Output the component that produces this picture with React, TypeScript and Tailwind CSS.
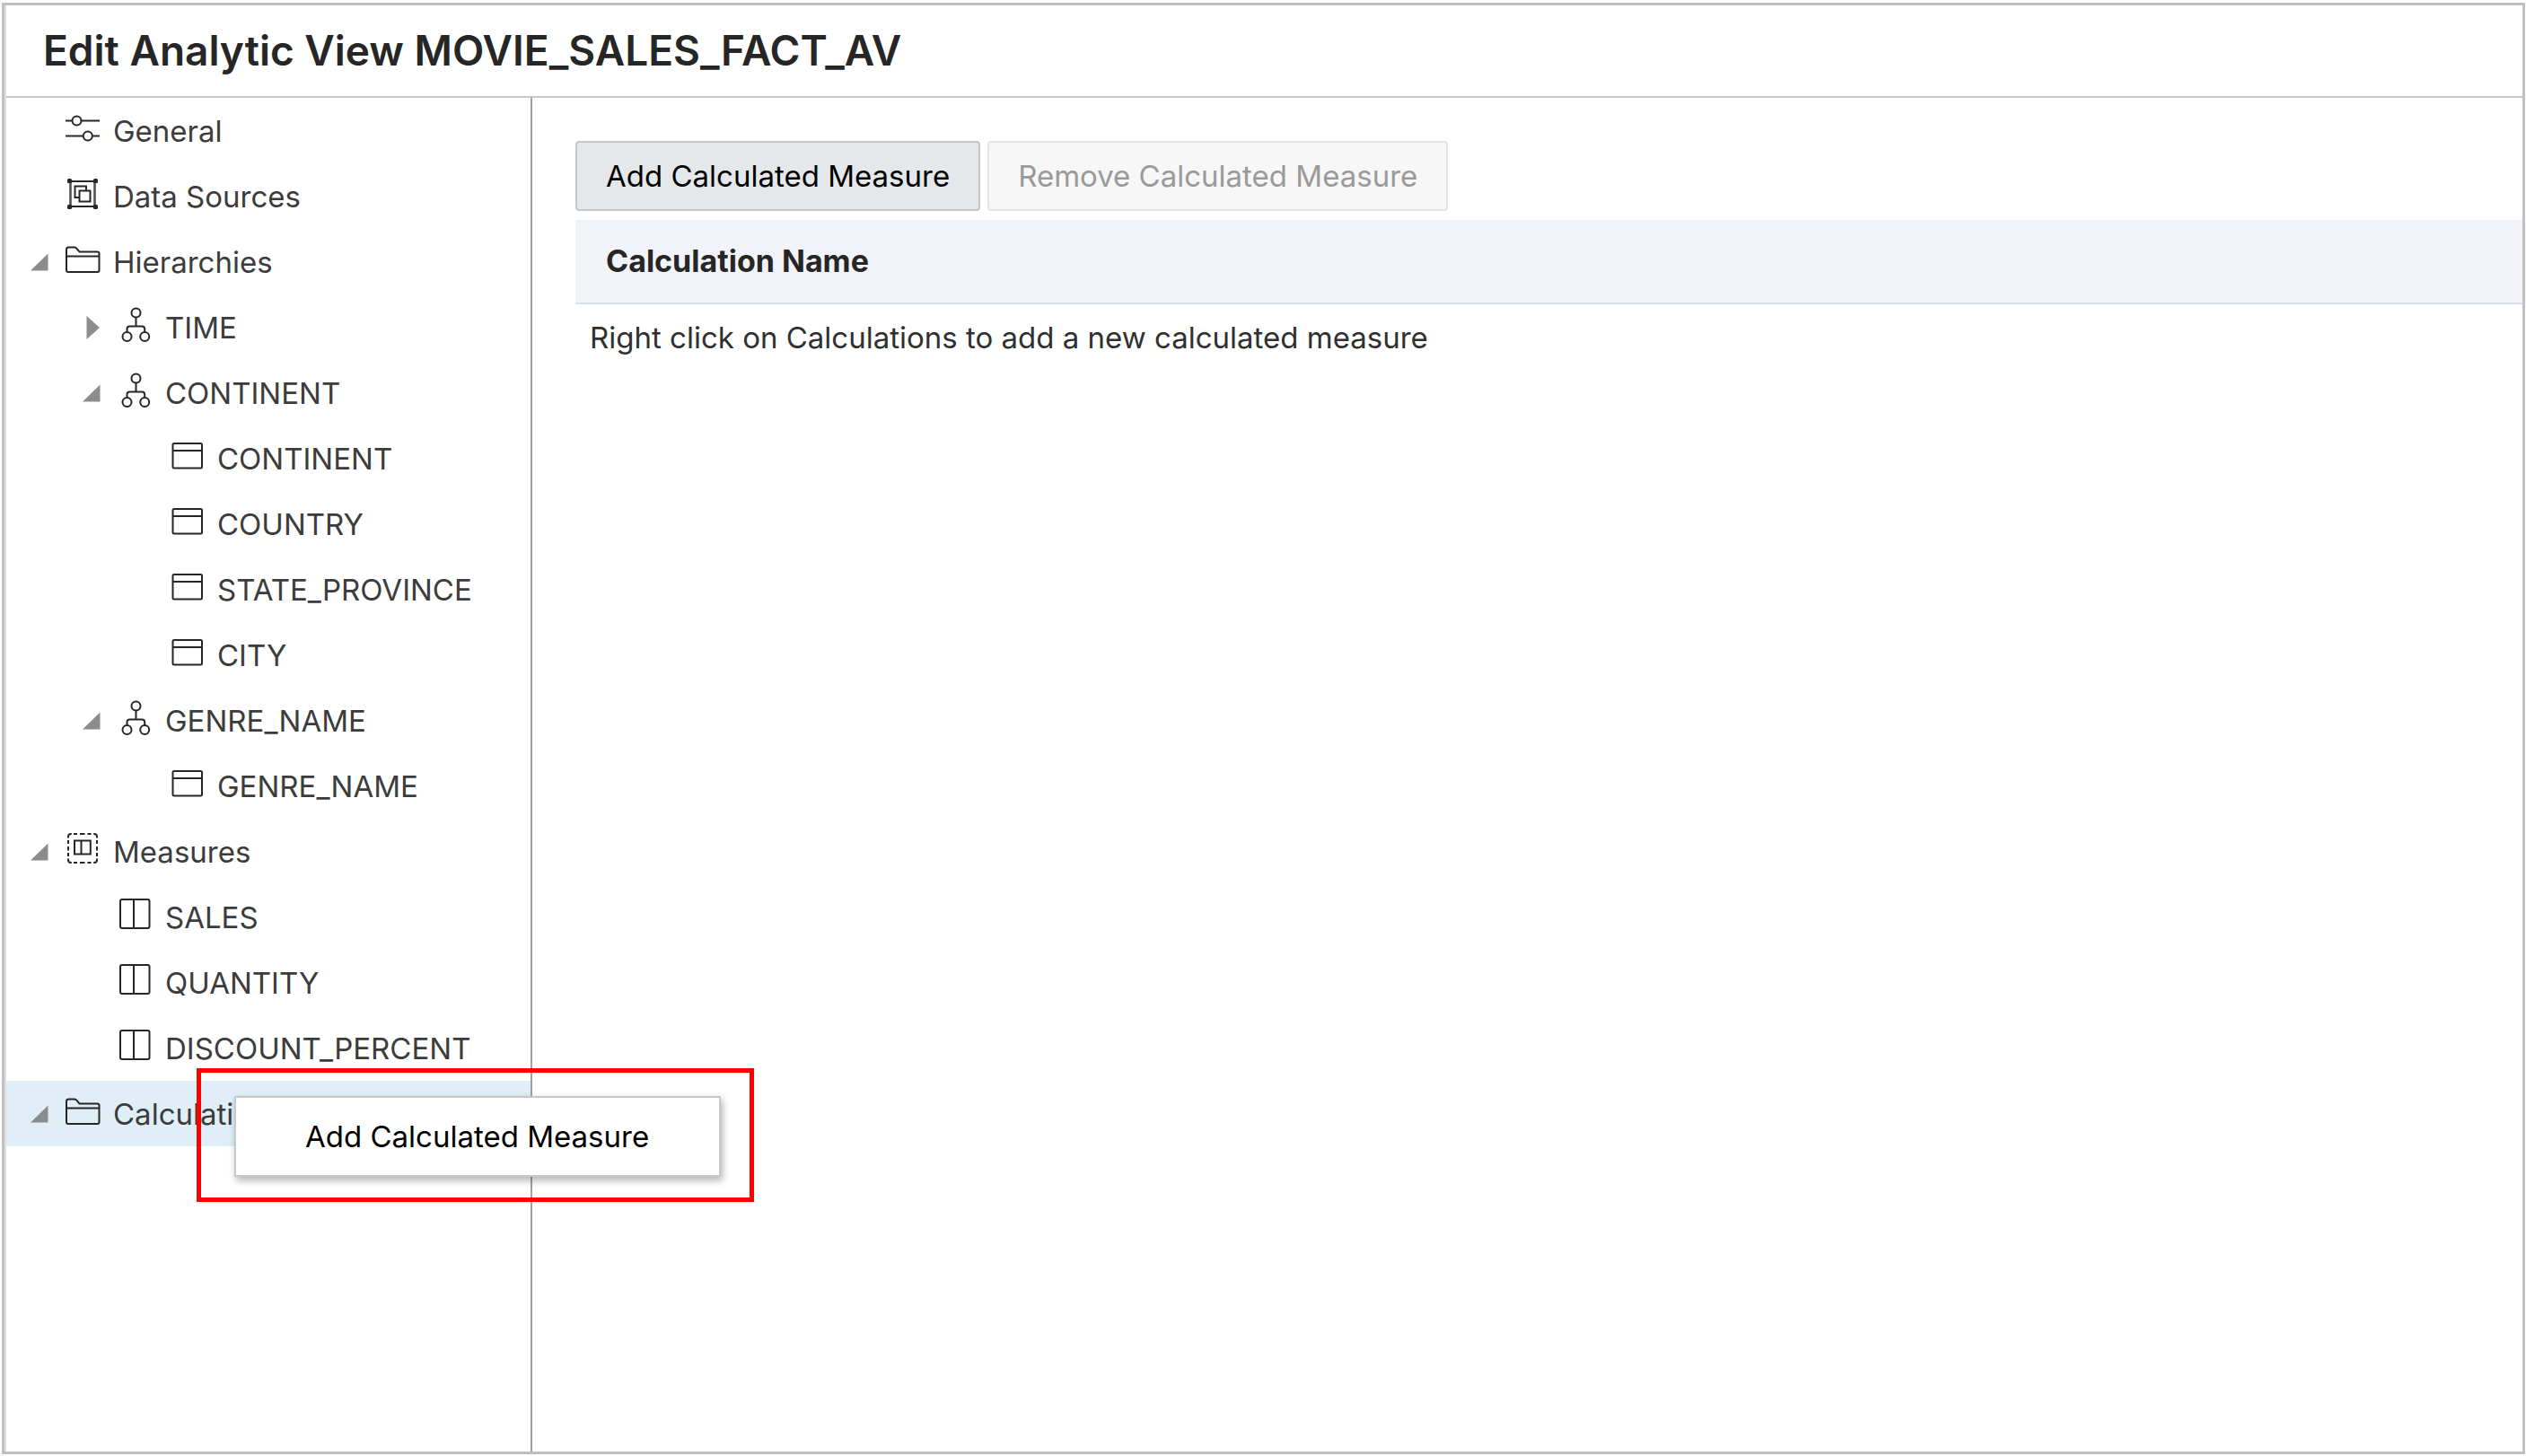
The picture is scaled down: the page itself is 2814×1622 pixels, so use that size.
import type { ReactNode } from "react";

type IconName = "sliders" | "sources" | "folder" | "hierarchy" | "level" | "measures" | "column";

type TreeItem = {
  label: string;
  icon: IconName;
  level: 0 | 1 | 2;
  state?: "open" | "closed";
  selected?: boolean;
};

const items: TreeItem[] = [
  { label: "General", icon: "sliders", level: 0 },
  { label: "Data Sources", icon: "sources", level: 0 },
  { label: "Hierarchies", icon: "folder", level: 0, state: "open" },
  { label: "TIME", icon: "hierarchy", level: 1, state: "closed" },
  { label: "CONTINENT", icon: "hierarchy", level: 1, state: "open" },
  { label: "CONTINENT", icon: "level", level: 2 },
  { label: "COUNTRY", icon: "level", level: 2 },
  { label: "STATE_PROVINCE", icon: "level", level: 2 },
  { label: "CITY", icon: "level", level: 2 },
  { label: "GENRE_NAME", icon: "hierarchy", level: 1, state: "open" },
  { label: "GENRE_NAME", icon: "level", level: 2 },
  { label: "Measures", icon: "measures", level: 0, state: "open" },
  { label: "SALES", icon: "column", level: 1 },
  { label: "QUANTITY", icon: "column", level: 1 },
  { label: "DISCOUNT_PERCENT", icon: "column", level: 1 },
  { label: "Calculations", icon: "folder", level: 0, state: "open", selected: true },
];

const indent = { 0: "pl-[27px]", 1: "pl-[85px]", 2: "pl-[143px]" };

const drawings: Record<IconName, ReactNode> = {
  sliders: (
    <>
      <path d="M1 11.5H8.500M18.500 11.500H39M1 28.500H20.500M31 28.500H39" />
      <circle cx="13.500" cy="11.500" r="5" />
      <circle cx="25.800" cy="28.500" r="5" />
    </>
  ),
  sources: (
    <>
      <path d="M5 6H35M5 34H35" />
      <path d="M6.500 6V34M33.500 6V34" strokeWidth="2.600" strokeOpacity="0.800" />
      <path d="M17 24H11.500V11.500H24V16" />
      <rect x="16.500" y="16.500" width="12" height="12" />
      <g fill="currentColor" stroke="none">
        <rect x="3" y="3" width="5" height="5" rx="1.500" />
        <rect x="32" y="3" width="5" height="5" rx="1.500" />
        <rect x="3" y="32" width="5" height="5" rx="1.500" />
        <rect x="32" y="32" width="5" height="5" rx="1.500" />
      </g>
    </>
  ),
  folder: (
    <path d="M2 16.500H38.500M4.500 6.500H11Q12.500 6.500 13.500 8L16.500 11.500H36.500Q38.500 11.500 38.500 13.500V32Q38.500 34 36.500 34H4Q2 34 2 32V9Q2 6.500 4.500 6.500Z" />
  ),
  hierarchy: (
    <>
      <circle cx="21.500" cy="6.500" r="5" />
      <circle cx="11.500" cy="33" r="5" />
      <circle cx="31.200" cy="33" r="5" />
      <path d="M21.500 11.500V21.500M11.500 28V24.500Q11.500 21.500 14.500 21.500H28Q31.200 21.500 31.200 24.500V28" />
    </>
  ),
  level: (
    <>
      <rect x="4.500" y="6" width="32.500" height="27.500" rx="1.500" />
      <path d="M4.500 14H37" />
    </>
  ),
  measures: (
    <>
      <path d="M4 7.500V6Q4 3 7 3H7.800M32.200 3H33Q36 3 36 6V7.500M36 30.500V32Q36 35 33 35H32.200M7.800 35H7Q4 35 4 32V30.500" />
      <path d="M10 3H14M17 3H22.500M25.500 3H29.500M10 35H14M17 35H22.500M25.500 35H29.500" />
      <path d="M4 10V14M4 17V21.500M4 24V28M36 10V14M36 17V21.500M36 24V28" />
      <rect x="11" y="10.500" width="17.800" height="15" />
      <path d="M18.500 10.500V25.500" />
    </>
  ),
  column: (
    <>
      <rect x="4" y="3" width="32.500" height="32" rx="2" />
      <path d="M19 3V35" />
    </>
  ),
};

function Icon({ name }: { name: IconName }) {
  return (
    <svg
      viewBox="0 0 40 40"
      className="mb-[5px] size-10 shrink-0 text-[#262626]"
      fill="none"
      stroke="currentColor"
      strokeWidth="2"
      aria-hidden="true"
    >
      {drawings[name]}
    </svg>
  );
}

function Arrow({ state }: { state?: "open" | "closed" }) {
  return (
    <svg viewBox="0 0 20 28" className="h-7 w-5 shrink-0" fill="#8b8c8e" aria-hidden="true">
      {state === "open" && <path d="M0 23.500H19.500V4.500Z" />}
      {state === "closed" && <path d="M4.500 1V27L19 14Z" />}
    </svg>
  );
}

function ContextMenu() {
  return (
    <>
      <div
        role="menu"
        className="absolute top-[17px] left-[254px] w-[542px] border-2 border-[#c8c8c8] bg-white shadow-[2px_4px_8px_rgba(0,0,0,0.3)]"
      >
        <button
          type="button"
          role="menuitem"
          className="block w-full py-[22px] pl-[77px] text-left leading-[42px] whitespace-nowrap text-black"
        >
          Add Calculated Measure
        </button>
      </div>
      <div className="pointer-events-none absolute -top-3.5 left-[212px] h-[149px] w-[621px] border-[5px] border-[#ff0000]" />
    </>
  );
}

export default function App() {
  return (
    <div className="flex min-h-screen bg-white pt-[3px] pr-px pb-[2px] pl-[2px] font-['Inter',sans-serif] text-[33px] leading-[42px] text-[#3c3c3c]">
      <div className="flex grow flex-col border-[3px] border-[#c0c0c0]">
        <div className="flex grow flex-col border-l-2 border-[#dfdfdf]">
          <header className="border-b-2 border-[#c6c6c6] px-[41px] pt-5 pb-[21px]">
            <h1 className="text-[46px] leading-[60px] font-semibold text-[#262626]">
              Edit Analytic View MOVIE_SALES_FACT_AV
            </h1>
          </header>
          <div className="flex grow">
            <nav aria-label="Analytic view" className="w-[586px] shrink-0 border-r-2 border-[#9e9e9e]">
              <ul>
                {items.map((item, i) => (
                  <li key={i} className="relative">
                    <button
                      type="button"
                      aria-expanded={item.state ? item.state === "open" : undefined}
                      className={
                        "flex h-[73px] w-full items-center text-left " +
                        indent[item.level] +
                        (item.selected ? " bg-[#e0eef8]" : "")
                      }
                    >
                      <Arrow state={item.state} />
                      <span className="flex items-center gap-3.5 pl-[18px]">
                        <Icon name={item.icon} />
                        <span>{item.label}</span>
                      </span>
                    </button>
                    {item.selected && <ContextMenu />}
                  </li>
                ))}
              </ul>
            </nav>
            <main className="grow pt-12 pl-12">
              <div className="flex gap-2">
                <button
                  type="button"
                  className="rounded-[4px] border-2 border-[#c4c7c8] bg-[#e4e8eb] px-8 py-4 text-black"
                >
                  Add Calculated Measure
                </button>
                <button
                  type="button"
                  disabled
                  className="rounded-[4px] border-2 border-[#e4e4e4] bg-[#f7f7f7] px-8 py-4 text-[#9a9a9a]"
                >
                  Remove Calculated Measure
                </button>
              </div>
              <table className="mt-2.5 w-full border-collapse text-left">
                <thead>
                  <tr className="border-b-2 border-[#d6dfe7] bg-[#f2f3f8]">
                    <th scope="col" className="px-[34px] py-[25px] text-[34px] font-bold text-[#262626]">
                      Calculation Name
                    </th>
                  </tr>
                </thead>
                <tbody>
                  <tr>
                    <td className="px-4 py-4 text-[#303030]">
                      Right click on Calculations to add a new calculated measure
                    </td>
                  </tr>
                </tbody>
              </table>
            </main>
          </div>
        </div>
      </div>
    </div>
  );
}
